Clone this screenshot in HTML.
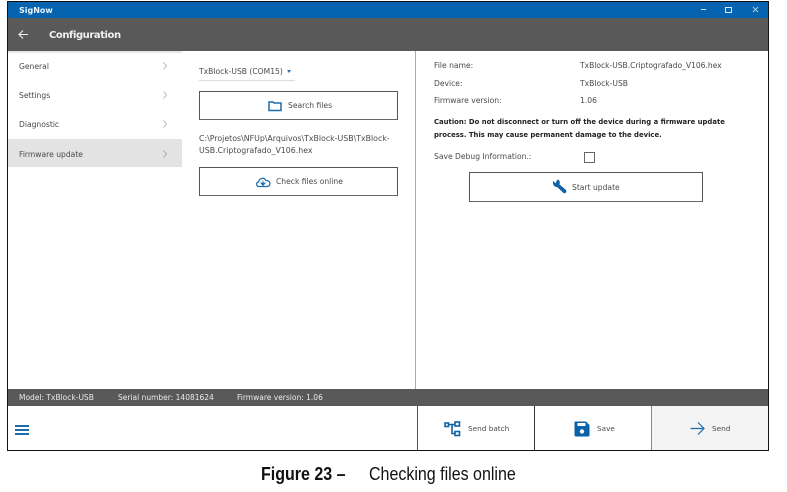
<!DOCTYPE html>
<html>
<head>
<meta charset="utf-8">
<style>
html,body{margin:0;padding:0;background:#fff}
body{width:787px;height:492px;position:relative;overflow:hidden;font-family:"DejaVu Sans","Liberation Sans",sans-serif;color:#444;filter:blur(.3px)}
div,svg{position:absolute}
.t{font-size:7.6px;white-space:nowrap;line-height:10px;color:#4a4a4a}
.chev{left:163px;width:4px;height:8px}
.btn{border:1px solid #555;border-bottom-color:#666;box-sizing:border-box;background:#fff}
</style>
</head>
<body>
<div style="left:7px;top:1px;width:762px;height:450px;border:1px solid #111;box-sizing:border-box;background:#fff"></div>
<div style="left:8px;top:2px;width:760px;height:16px;background:#0563b0"></div>
<div class="t" style="left:19px;top:5.500px;color:#e8f2fb;font-weight:bold;font-size:8px">SigNow</div>
<div style="left:701px;top:9px;width:5px;height:1px;background:#cfe2f3"></div>
<div style="left:725px;top:7px;width:5px;height:4px;border:1px solid #dbe9f5"></div>
<svg style="left:752px;top:6px" width="7" height="7" viewBox="0 0 7 7"><path d="M1 1L6 6M6 1L1 6" stroke="#a9cbe6" stroke-width="1"/></svg>

<div style="left:8px;top:18px;width:760px;height:33px;background:#595959"></div>
<svg style="left:18px;top:29px" width="11" height="11" viewBox="0 0 11 11"><path d="M1 5.500H10M5 1.500L1 5.500L5 9.500" stroke="#eee" stroke-width="1.100" fill="none"/></svg>
<div class="t" style="left:49px;top:29px;color:#f0f0f0;font-weight:bold;font-size:10px;line-height:13px;letter-spacing:-.43px">Configuration</div>

<div style="left:8px;top:51px;width:174px;height:3px;background:linear-gradient(#ddd,#fff)"></div>
<div style="left:8px;top:139px;width:174px;height:28px;background:#e3e3e3"></div>
<div class="t" style="left:19px;top:62px">General</div>
<div class="t" style="left:19px;top:91px">Settings</div>
<div class="t" style="left:19px;top:120px">Diagnostic</div>
<div class="t" style="left:19px;top:150px">Firmware update</div>
<svg class="chev" style="top:62px" viewBox="0 0 4 8"><path d="M.5 .5L3.500 4L.5 7.500" stroke="#aaa" fill="none" stroke-width=".8"/></svg>
<svg class="chev" style="top:91px" viewBox="0 0 4 8"><path d="M.5 .5L3.500 4L.5 7.500" stroke="#aaa" fill="none" stroke-width=".8"/></svg>
<svg class="chev" style="top:120px" viewBox="0 0 4 8"><path d="M.5 .5L3.500 4L.5 7.500" stroke="#aaa" fill="none" stroke-width=".8"/></svg>
<svg class="chev" style="top:150px" viewBox="0 0 4 8"><path d="M.5 .5L3.500 4L.5 7.500" stroke="#999" fill="none" stroke-width=".8"/></svg>

<div class="t" style="left:199px;top:67px">TxBlock-USB (COM15)</div>
<div style="left:287px;top:70px;width:0;height:0;border-left:2px solid transparent;border-right:2px solid transparent;border-top:3px solid #2a6fb0"></div>
<div style="left:199px;top:80px;width:96px;height:1px;background:#ddd"></div>

<div class="btn" style="left:199px;top:91px;width:199px;height:29px"></div>
<svg style="left:268px;top:100px" width="14" height="12" viewBox="0 0 14 12"><path d="M1 2V10.500H13V3H6L5 2Z" fill="none" stroke="#1c6cab" stroke-width="1.500"/></svg>
<div class="t" style="left:288px;top:101px">Search files</div>

<div class="t" style="left:199px;top:133px;line-height:12px;white-space:nowrap;width:200px;font-size:7.830px">C:\Projetos\NFUp\Arquivos\TxBlock-USB\TxBlock-<br>USB.Criptografado_V106.hex</div>

<div class="btn" style="left:199px;top:167px;width:199px;height:29px"></div>
<svg style="left:255px;top:176px" width="16" height="12" viewBox="0 0 16 12"><path d="M4 10.500C1 10.500 .8 6.500 3.500 6C4 2.500 9 .5 11 4.500C14 4.500 15.500 6.500 14.800 8.500C14.300 10 13 10.500 12 10.500Z" fill="none" stroke="#1c6cab" stroke-width="1.200"/><path d="M8 4.500V9M5.800 7L8 9.500L10.200 7Z" fill="#1c6cab" stroke="#1c6cab" stroke-width=".8"/></svg>
<div class="t" style="left:276px;top:177px">Check files online</div>

<div style="left:415px;top:51px;width:1px;height:339px;background:#aaa"></div>
<div class="t" style="left:434px;top:61px">File name:</div>
<div class="t" style="left:580px;top:61px;font-size:7.560px">TxBlock-USB.Criptografado_V106.hex</div>
<div class="t" style="left:434px;top:79px">Device:</div>
<div class="t" style="left:580px;top:79px">TxBlock-USB</div>
<div class="t" style="left:434px;top:96px">Firmware version:</div>
<div class="t" style="left:580px;top:96px">1.06</div>
<div class="t" style="left:434px;top:116px;font-weight:bold;color:#222;line-height:12.500px;font-size:6.860px">Caution: Do not disconnect or turn off the device during a firmware update<br>process. This may cause permanent damage to the device.</div>
<div class="t" style="left:434px;top:152px">Save Debug Information.:</div>
<div style="left:584px;top:151.500px;width:11px;height:11px;border:1px solid #666;box-sizing:border-box"></div>

<div class="btn" style="left:469px;top:172px;width:234px;height:30px"></div>
<svg style="left:552px;top:179px" width="15" height="15" viewBox="0 0 15 15"><path d="M1 2L3.800 4.200L5 1C6.500 .2 7.800 1.500 7.800 3.500C7.800 4.500 7.500 5 7.500 5.500L14 11C15.200 12.800 13.300 15 11.500 14L5.200 8C2.800 8.300 .5 6 1 2Z" fill="#0f62a6"/></svg>
<div class="t" style="left:572px;top:183px">Start update</div>

<div style="left:8px;top:389px;width:760px;height:17px;background:#595959"></div>
<div class="t" style="left:19px;top:393px;color:#eaeaea;font-size:7.500px">Model: TxBlock-USB</div>
<div class="t" style="left:118px;top:393px;color:#eaeaea;font-size:7.500px">Serial number: 14081624</div>
<div class="t" style="left:237px;top:393px;color:#eaeaea;font-size:7.500px">Firmware version: 1.06</div>

<div style="left:15px;top:425px;width:14px;height:1.500px;background:#1c6cab"></div>
<div style="left:15px;top:429px;width:14px;height:1.500px;background:#1c6cab"></div>
<div style="left:15px;top:433px;width:14px;height:1.500px;background:#1c6cab"></div>

<div style="left:417px;top:406px;width:1px;height:44px;background:#555"></div>
<div style="left:534px;top:406px;width:1px;height:44px;background:#333"></div>
<div style="left:651px;top:406px;width:117px;height:44px;background:#f3f3f3;border-left:1px solid #888;box-sizing:border-box"></div>

<svg style="left:444px;top:421px" width="17" height="16" viewBox="0 0 17 16"><g fill="none" stroke="#0f62a6" stroke-width="1.600"><rect x="1" y="2" width="3.500" height="3.500"/><rect x="11" y="1" width="4.500" height="4"/><rect x="11" y="10.500" width="4.500" height="4"/><path d="M4.300 3.500H11M8 3.500V12.500H11"/></g></svg>
<div class="t" style="left:468px;top:424px;font-size:7.300px">Send batch</div>

<svg style="left:574px;top:421px" width="16" height="16" viewBox="0 0 16 16"><path d="M1.500 0.500H12L15.500 4V14C15.500 15 15 15.500 14 15.500H2C1 15.500 .5 15 .5 14V1.500C.5 1 1 .5 1.500 .5Z" fill="#0a62a8"/><rect x="3.500" y="2" width="8" height="3" fill="#fff"/><circle cx="8" cy="10.500" r="2.200" fill="#fff"/></svg>
<div class="t" style="left:597px;top:424px;font-size:7.300px">Save</div>

<svg style="left:690px;top:421px" width="15" height="15" viewBox="0 0 15 15"><path d="M.5 7.500H13.500M8 1.500L14 7.500L8 13.500" stroke="#1c6cab" stroke-width="1.200" fill="none"/></svg>
<div class="t" style="left:712px;top:424px;font-size:7.300px">Send</div>

<div style="left:261px;top:464px;font-family:'Liberation Sans',sans-serif;font-size:18px;line-height:21px;font-weight:bold;color:#111;white-space:nowrap;transform:scaleX(.89);transform-origin:0 0">Figure 23 –</div>
<div style="left:369px;top:464px;font-family:'Liberation Sans',sans-serif;font-size:18px;line-height:21px;color:#111;white-space:nowrap;transform:scaleX(.889);transform-origin:0 0">Checking files online</div>
</body>
</html>
